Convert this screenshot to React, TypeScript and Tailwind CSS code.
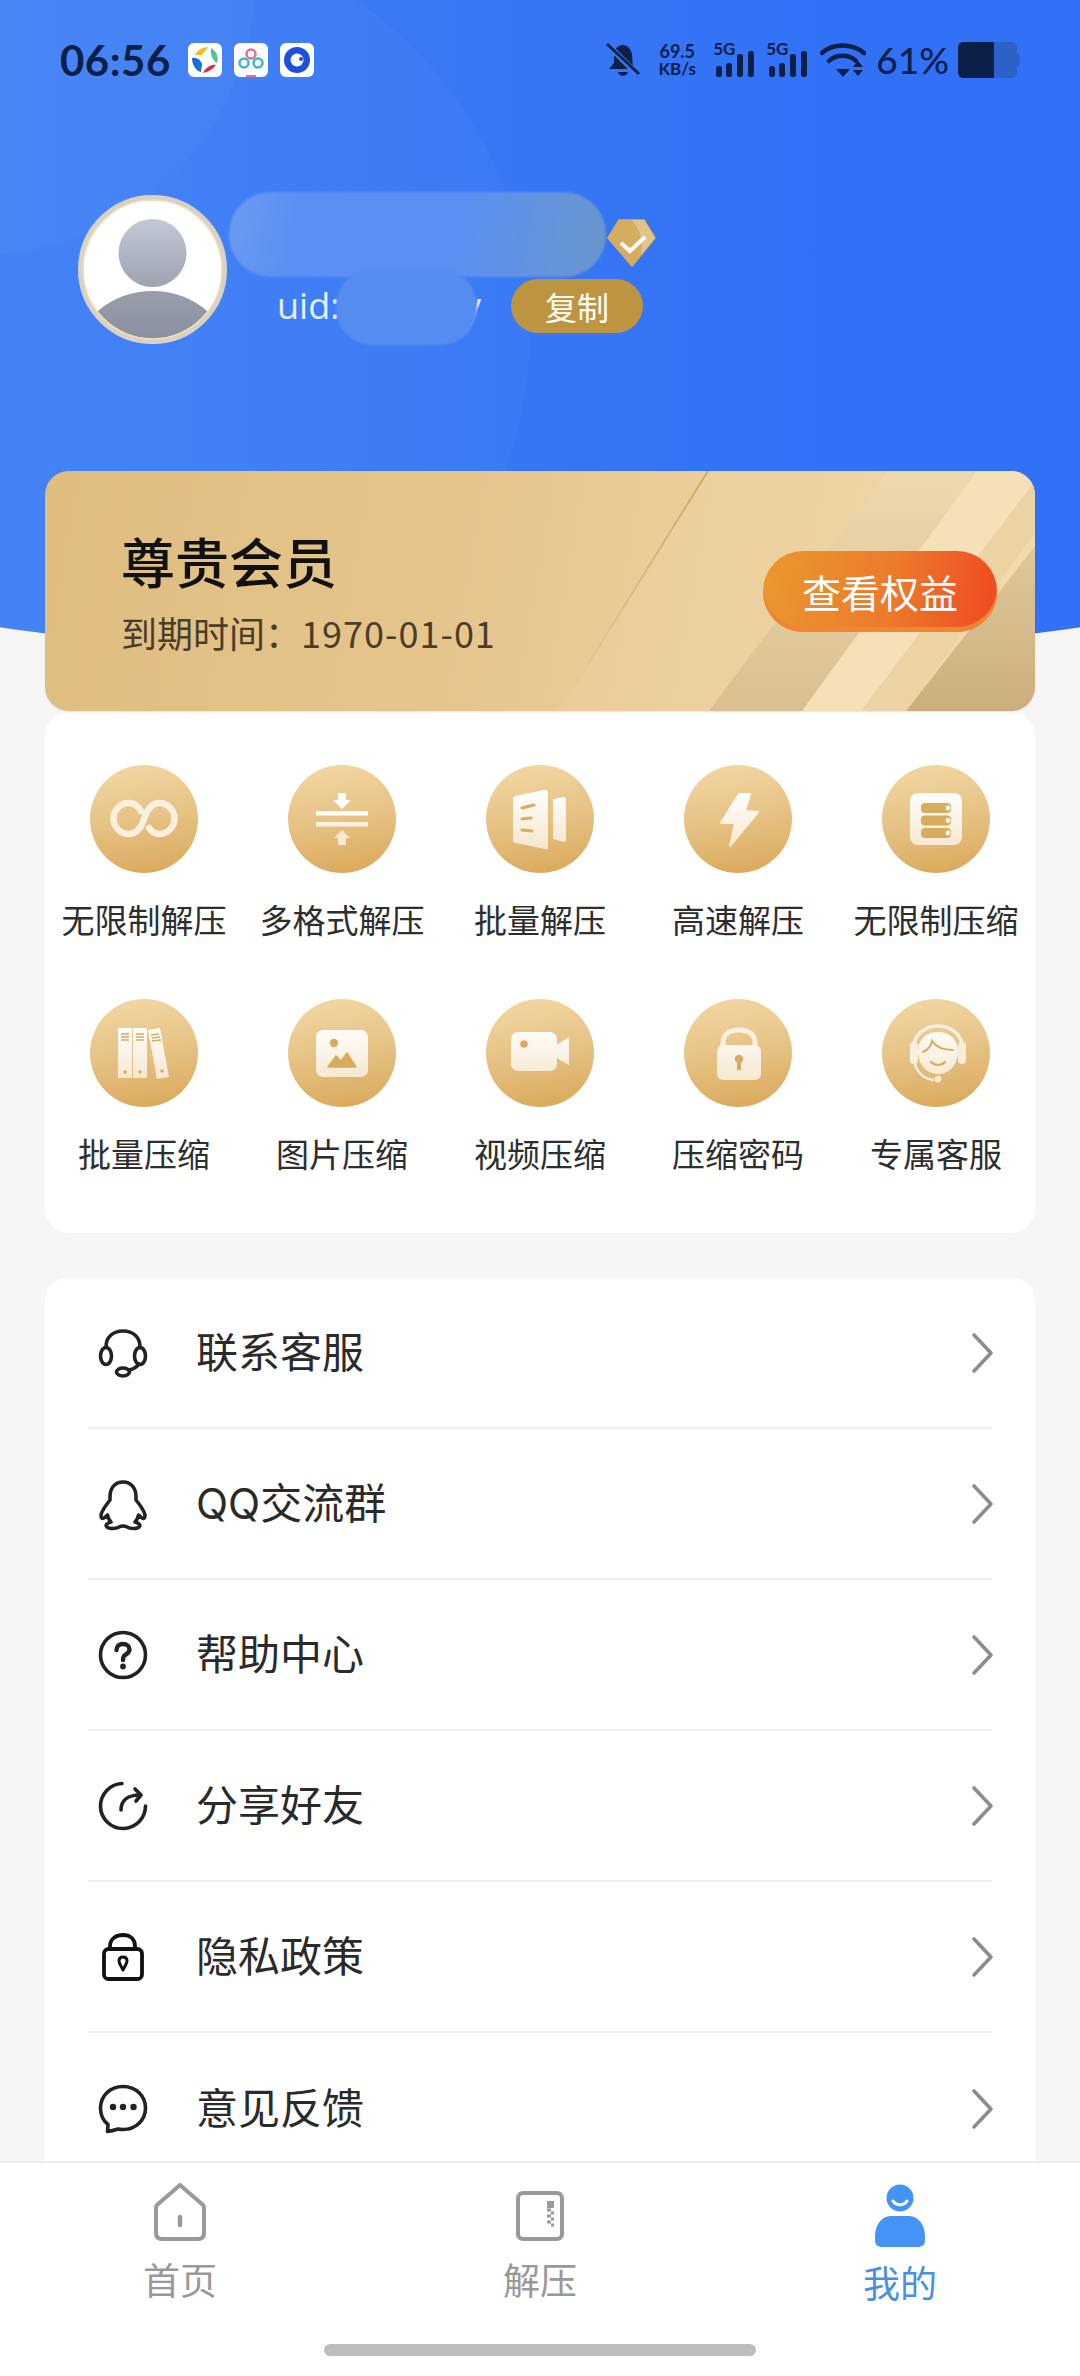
import type { ReactNode } from "react";

const ink = "#0b1f48";
const gold = "#d9ab5f";
const fill = "url(#goldIconFill)";

function Bars() {
  return (
    <div className="relative w-[43px] h-[36px]">
      <span className="absolute left-0 top-[-2px] text-[17px] leading-[18px] font-bold text-[#0b1f48] font-['Lato',sans-serif]">5G</span>
      <svg width="43" height="36" viewBox="0 0 43 36">
        <rect x="3" y="24" width="6" height="11" rx="2.5" fill={ink} />
        <rect x="13" y="21" width="6" height="14" rx="2.5" fill={ink} />
        <rect x="24" y="12" width="6" height="23" rx="2.5" fill={ink} />
        <rect x="35" y="9" width="6" height="26" rx="2.5" fill={ink} />
      </svg>
    </div>
  );
}

function StatusBar() {
  return (
    <div className="flex items-center justify-between h-[36px] mt-[42px] ml-[60px] mr-[60px]">
      <div className="flex items-center">
        <span className="w-[128px] text-[42px] leading-[36px] font-bold tracking-[0.5px] text-[#0b1f48] font-['Lato',sans-serif]">06:56</span>
        <svg width="34" height="34" viewBox="0 0 34 34">
          <rect width="34" height="34" rx="6" fill="#fff" />
          <path d="M7 12 C9 7 15 4 20 4 L14 12 Z" fill="#f5bd14" />
          <path d="M23 5 C28 8 31 13 29 20 C25 18 22 12 23 5 Z" fill="#4fc68f" />
          <path d="M4 15 C8 14 12 16 14 21 L13 29 C8 28 4 22 4 15 Z" fill="#1a6fd6" />
          <path d="M15 30 C20 29 25 26 28 22 C24 21 18 24 15 30 Z" fill="#e8224a" />
        </svg>
        <svg className="ml-[12px]" width="34" height="34" viewBox="0 0 34 34">
          <rect width="34" height="34" rx="6" fill="#fff" />
          <circle cx="17" cy="11" r="4.5" fill="none" stroke="#e2708c" strokeWidth="2.5" />
          <circle cx="10" cy="20" r="4.5" fill="none" stroke="#3fb4cf" strokeWidth="2.5" />
          <circle cx="24" cy="20" r="4.5" fill="none" stroke="#3fb4cf" strokeWidth="2.5" />
          <rect x="12" y="32" width="10" height="2" fill="#e2708c" />
        </svg>
        <svg className="ml-[12px]" width="34" height="34" viewBox="0 0 34 34">
          <rect width="34" height="34" rx="6" fill="#fff" />
          <circle cx="17" cy="17" r="13" fill="#1c4fe0" />
          <circle cx="17" cy="17" r="6.5" fill="#fff" />
          <circle cx="21" cy="16" r="2" fill="#1c4fe0" />
        </svg>
      </div>
      <div className="flex items-center">
        <svg width="34" height="36" viewBox="0 0 34 36">
          <path d="M17 3 C11 3 8 8 8 14 L8 21 L3 27 L27 27 L26 12 C24 6 21 3 17 3 Z" fill={ink} />
          <path d="M12 30 C13 35 21 35 22 30 Z" fill={ink} />
          <path d="M2 3 L32 33" stroke="#3a78f5" strokeWidth="6" />
          <path d="M1 2 L33 32" stroke={ink} strokeWidth="3" />
        </svg>
        <div className="ml-[15px] w-[44px] flex flex-col items-center text-[18px] leading-[18px] font-bold text-[#0b1f48] font-['Lato',sans-serif]">
          <span>69.5</span>
          <span className="text-[17px]">KB/s</span>
        </div>
        <div className="ml-[14px]"><Bars /></div>
        <div className="ml-[10px]"><Bars /></div>
        <svg className="ml-[11px]" width="46" height="36" viewBox="0 0 46 36">
          <path d="M2 11 C13 1 32 1 44 11" fill="none" stroke={ink} strokeWidth="4.5" strokeLinecap="round" />
          <path d="M9 19 C16 12 29 12 36 19" fill="none" stroke={ink} strokeWidth="4.5" strokeLinecap="round" />
          <path d="M16 27 L30 27 L23 35 Z" fill={ink} />
          <path d="M33 25 L38 19 L43 25 Z M33 28 L43 28 L38 34 Z" fill={ink} />
        </svg>
        <span className="ml-[10px] text-[37px] leading-[36px] font-medium text-[#0b1f48] font-['Lato',sans-serif]">61%</span>
        <svg className="ml-[9px]" width="62" height="36" viewBox="0 0 62 36">
          <path d="M35 0 L53 0 C57 0 59 2 59 6 L59 30 C59 34 57 36 53 36 L35 36 Z" fill="#2c62c8" />
          <path d="M59 11 C61 12 62 15 62 18 C62 21 61 24 59 25 Z" fill="#2c62c8" />
          <path d="M6 0 L36 0 L36 36 L6 36 C2 36 0 34 0 30 L0 6 C0 2 2 0 6 0 Z" fill={ink} />
        </svg>
      </div>
    </div>
  );
}

function Avatar() {
  return (
    <svg className="mt-[3px] shrink-0" width="149" height="149" viewBox="0 0 149 149">
      <defs>
        <linearGradient id="avatarHead" x1="0" y1="0" x2="0" y2="1">
          <stop offset="0" stopColor="#c3c8d6" />
          <stop offset="1" stopColor="#9ea3b2" />
        </linearGradient>
        <linearGradient id="avatarBody" x1="0" y1="0" x2="0" y2="1">
          <stop offset="0" stopColor="#989eac" />
          <stop offset="1" stopColor="#6f7585" />
        </linearGradient>
        <clipPath id="avatarClip">
          <circle cx="74.5" cy="74.5" r="69" />
        </clipPath>
      </defs>
      <circle cx="74.5" cy="74.5" r="72" fill="#fff" stroke="#d9d2c4" strokeWidth="5" />
      <circle cx="74.5" cy="58" r="34" fill="url(#avatarHead)" />
      <g clipPath="url(#avatarClip)">
        <ellipse cx="74.5" cy="166" rx="78" ry="70" fill="url(#avatarBody)" />
      </g>
      <circle cx="74.5" cy="74.5" r="69.5" fill="none" stroke="#f0dcb6" strokeWidth="1.5" />
    </svg>
  );
}

function Profile() {
  return (
    <div className="flex items-start mt-[114px] ml-[78px] h-[279px]">
      <Avatar />
      <div className="ml-[2px] flex flex-col">
        <div className="flex items-start">
          <div className="w-[377px] h-[85px] rounded-[42px] bg-[linear-gradient(100deg,#6c9af2_0%,#5a90f3_18%,#5a90f3_60%,#6a96cc_100%)] blur-[1px]" />
          <svg className="mt-[27px] ml-[1px]" width="49" height="48" viewBox="0 0 49 48">
            <path d="M12 1 L37 1 L48 19 L25 47 L1 19 Z" fill="#d6ac5f" stroke="#d6ac5f" strokeLinejoin="round" strokeWidth="1.5" />
            <path d="M25 1 L37 1 L48 19 L34 36 C37 20 32 10 25 1 Z" fill="#e3c488" />
            <path d="M14 24 L23 32 L38 18" fill="none" stroke="#fff" strokeWidth="4" />
          </svg>
        </div>
        <div className="relative flex items-center h-[54px] mt-[2px] ml-[48px]">
          <div className="flex justify-between w-[204px] mr-[30px] text-[36px] leading-[54px] text-[#e6efff] font-['Open_Sans',sans-serif]">
            <span>uid:</span>
            <span>y</span>
          </div>
          <span className="flex items-center justify-center w-[132px] h-[54px] rounded-full bg-[#bd9440] text-[32px] text-white">复制</span>
          <div className="absolute left-[59px] top-[-9px] w-[141px] h-[75px] rounded-[36px] bg-[#558cf0] blur-[1px]" />
        </div>
      </div>
    </div>
  );
}

function MemberCard() {
  return (
    <div className="relative mx-[45px] h-[240px] rounded-[24px] overflow-hidden bg-[linear-gradient(100deg,#dfbd80_0%,#e6c68e_45%,#f3dcb0_100%)] shadow-[0_1px_2px_rgba(0,0,0,0.08)]">
      <svg className="absolute inset-0" width="990" height="240" viewBox="0 0 990 240">
        <defs>
          <linearGradient id="stripeA" x1="0" y1="0" x2="0" y2="1">
            <stop offset="0" stopColor="#eed9ad" />
            <stop offset="1" stopColor="#dac090" />
          </linearGradient>
          <linearGradient id="stripeCorner" x1="0" y1="0" x2="0" y2="1">
            <stop offset="0" stopColor="#e0c899" />
            <stop offset="1" stopColor="#cbae7e" />
          </linearGradient>
          <linearGradient id="stripeLine" x1="0" y1="0" x2="0" y2="1">
            <stop offset="0" stopColor="#c9a25f" />
            <stop offset="1" stopColor="#e9cf9f" />
          </linearGradient>
        </defs>
        <path d="M662 0 L513 240 L664 240 L843 0 Z" fill="#eed5a6" opacity="0.3" />
        <path d="M662 0 L513 240 L515 240 L664 0 Z" fill="url(#stripeLine)" />
        <path d="M664 240 L757 240 L932 0 L843 0 Z" fill="url(#stripeA)" />
        <path d="M757 240 L816 240 L990 10 L990 0 L932 0 Z" fill="#f6e0b7" />
        <path d="M816 240 L861 240 L990 62 L990 10 Z" fill="#ecd3a3" />
        <path d="M861 240 L990 240 L990 75 Z" fill="url(#stripeCorner)" />
      </svg>
      <div className="relative flex items-center justify-between h-full pl-[76px] pr-[38px]">
        <div className="flex flex-col">
          <span className="text-[54px] leading-[68px] font-medium text-[#111]">尊贵会员</span>
          <span className="mt-[13px] text-[36px] leading-[48px] text-[#4a3d2a]">
            到期时间：<span className="tracking-[1px]">1970-01-01</span>
          </span>
        </div>
        <div className="flex items-center justify-center w-[234px] h-[81px] mt-[1px] rounded-[40px] bg-[linear-gradient(100deg,#e9992f_0%,#ec7a2b_55%,#ef4822_100%)] shadow-[inset_0_-5px_0_#ee8632] text-[39px] text-white">
          查看权益
        </div>
      </div>
    </div>
  );
}

const perks: { label: string; icon: ReactNode }[] = [
  {
    label: "无限制解压",
    icon: (
      <path
        d="M51 46 C48 41 44 38 39 38 A15.5 15.5 0 0 0 39 69 C46 69 51 63 54 54 C57 45 62 38 69 38 A15.5 15.5 0 0 1 69 69 C65 69 62 67 59 63"
        fill="none"
        stroke="#fbf0df"
        strokeWidth="6.5"
        strokeLinecap="round"
      />
    ),
  },
  {
    label: "多格式解压",
    icon: (
      <>
        <path d="M50 28 H58 V35 H63 L54 44 L45 35 H50 Z" fill="#fff" />
        <rect x="28" y="46" width="52" height="4.5" fill="#fff" />
        <rect x="28" y="57" width="52" height="4.5" fill="#fbf0df" />
        <path d="M54 65 L62 73 H58 V80 H50 V73 H46 Z" fill="#f8ead2" />
      </>
    ),
  },
  {
    label: "批量解压",
    icon: (
      <>
        <path d="M29 31 L58 25 C61 25 62 26 62 28 L62 82 C62 84 61 85 59 84 L30 78 C28 78 27 77 27 75 L27 33 C27 32 28 31 29 31 Z" fill={fill} />
        <path d="M67 34 L78 32 C80 32 80 33 80 35 L80 74 C80 76 80 77 78 77 L67 74 Z" fill={fill} />
        <path d="M36 43 L48 40 M36 54 L45 53 M36 65 L46 66" stroke={gold} strokeWidth="3" strokeLinecap="round" />
      </>
    ),
  },
  {
    label: "高速解压",
    icon: <path d="M55 29 L66 29 L61 46 L74 47 L46 81 L51 58 L37 58 Z" fill={fill} stroke={fill} strokeWidth="2" strokeLinejoin="round" />,
  },
  {
    label: "无限制压缩",
    icon: (
      <>
        <rect x="28" y="28" width="52" height="52" rx="8" fill={fill} />
        <rect x="39" y="38" width="30" height="10" rx="4" fill={gold} />
        <rect x="39" y="50.5" width="30" height="10" rx="4" fill={gold} />
        <rect x="39" y="63" width="30" height="10" rx="4" fill={gold} />
        <circle cx="66" cy="43" r="2.4" fill="#fff" />
        <circle cx="66" cy="55.5" r="2.4" fill="#fff" />
        <circle cx="66" cy="68" r="2.4" fill="#fff" />
      </>
    ),
  },
  {
    label: "批量压缩",
    icon: (
      <>
        <rect x="28" y="29" width="14" height="50" fill={fill} />
        <rect x="43" y="29" width="14" height="50" fill={fill} />
        <path d="M58 31 L70 29 L79 78 L67 80 Z" fill={fill} />
        <path d="M31 35 H39 M31 38 H39 M31 41 H39 M46 35 H54 M46 38 H54 M46 41 H54 M61 36 L69 35 M62 39 L70 38 M62 42 L71 41" stroke={gold} strokeWidth="1.4" />
        <circle cx="35" cy="73" r="1.8" fill={gold} />
        <circle cx="50" cy="73" r="1.8" fill={gold} />
        <circle cx="72" cy="72" r="1.8" fill={gold} />
      </>
    ),
  },
  {
    label: "图片压缩",
    icon: (
      <>
        <rect x="28" y="31" width="52" height="47" rx="7" fill={fill} />
        <circle cx="46" cy="44" r="4.2" fill={gold} />
        <path d="M40 68 L48 57 L53 62 L59 54 L68 68 Z" fill={gold} stroke={gold} strokeWidth="1.5" strokeLinejoin="round" />
      </>
    ),
  },
  {
    label: "视频压缩",
    icon: (
      <>
        <rect x="25" y="33" width="46" height="39" rx="7" fill={fill} />
        <path d="M69 47 L83 38 L83 66 L69 58 Z" fill={fill} />
        <circle cx="38" cy="45" r="3.8" fill={gold} />
      </>
    ),
  },
  {
    label: "压缩密码",
    icon: (
      <>
        <path d="M39 48 L39 44 C39 35 46 31 55 31 C64 31 71 35 71 44 L71 48" fill="none" stroke="#fbf0df" strokeWidth="5" />
        <rect x="33" y="46" width="44" height="35" rx="6" fill={fill} />
        <circle cx="55" cy="60" r="4.2" fill={gold} />
        <rect x="53" y="60" width="4" height="11" fill={gold} />
      </>
    ),
  },
  {
    label: "专属客服",
    icon: (
      <>
        <path d="M31 48 C33 35 43 27 56 27 C69 27 79 35 81 48" fill="none" stroke="#fbf0df" strokeWidth="3.5" />
        <rect x="28" y="43" width="8" height="22" rx="4" fill="#fbf0df" />
        <rect x="76" y="43" width="8" height="22" rx="4" fill="#f8ecd6" />
        <path d="M56 33 C45 33 36 40 36 52 C36 65 44 75 56 75 C68 75 76 65 76 52 C76 40 67 33 56 33 Z" fill={fill} />
        <path d="M41 53 C46 51 49 47 50 42 C54 48 62 51 71 51" fill="none" stroke={gold} strokeWidth="2" strokeLinecap="round" />
        <path d="M49 63 C53 67 59 67 63 63" fill="none" stroke={gold} strokeWidth="2.2" strokeLinecap="round" />
        <path d="M33 65 C36 75 43 80 52 81" fill="none" stroke="#fbf0df" strokeWidth="2.5" />
        <circle cx="56" cy="80" r="3.5" fill="#f5e6cd" />
      </>
    ),
  },
];

function Perks() {
  return (
    <div className="mx-[45px] mt-[1px] h-[521px] pt-[53px] rounded-[24px] bg-white grid grid-cols-5 grid-rows-[234px_234px] content-start">
      {perks.map((p) => (
        <div key={p.label} className="flex flex-col items-center">
          <div className="w-[108px] h-[108px] rounded-full bg-[linear-gradient(170deg,#f3d9a6_0%,#e6c284_50%,#d9a757_100%)]">
            <svg width="108" height="108" viewBox="0 0 108 108">{p.icon}</svg>
          </div>
          <span className="mt-[23px] text-[33px] leading-[46px] text-[#2e2e2e] whitespace-nowrap">{p.label}</span>
        </div>
      ))}
    </div>
  );
}

const iconStroke = { fill: "none", stroke: "#222", strokeWidth: 3.6, strokeLinecap: "round", strokeLinejoin: "round" } as const;

const menu: { label: string; icon: ReactNode }[] = [
  {
    label: "联系客服",
    icon: (
      <g {...iconStroke}>
        <ellipse cx="7" cy="27" rx="5.5" ry="8.5" />
        <ellipse cx="41" cy="27" rx="5.5" ry="8.5" />
        <path d="M7 18 C7 8 14 2 24 2 C34 2 41 8 41 18" />
        <ellipse cx="24" cy="43" rx="6.5" ry="4" />
        <path d="M30 41 C35 40 38 38 40 35" />
      </g>
    ),
  },
  {
    label: "QQ交流群",
    icon: (
      <path
        {...iconStroke}
        d="M24 2 C15 2 11 9 11 17 L11 20 C7 25 3 30 2 35 C2 38 3 39 5 38 L8.5 35 C9 38 10 40 12 42 C8 43 6 45 8 47 C10 49 17 49 20 47 C22 46 23 46 24 46 C25 46 26 46 28 47 C31 49 38 49 40 47 C42 45 40 43 36 42 C38 40 39 38 39.5 35 L43 38 C45 39 46 38 46 35 C45 30 41 25 37 20 L37 17 C37 9 33 2 24 2 Z"
      />
    ),
  },
  {
    label: "帮助中心",
    icon: (
      <g {...iconStroke}>
        <circle cx="24" cy="24" r="22.5" />
        <path d="M17.5 19 C17.5 15 20.5 13 24 13 C28 13 30.5 15.5 30.5 18.5 C30.5 22 27 23 25 25 C24.4 25.8 24 26.5 24 29" strokeWidth="4.4" />
        <circle cx="24" cy="35.5" r="1.4" strokeWidth="3" />
      </g>
    ),
  },
  {
    label: "分享好友",
    icon: (
      <g {...iconStroke}>
        <path d="M23 1.5 A22.5 22.5 0 1 0 46.5 24" />
        <path d="M22 28 C22 19 28 13 41 13" />
        <path d="M36 7 L42 13 L37 19" />
      </g>
    ),
  },
  {
    label: "隐私政策",
    icon: (
      <g {...iconStroke} stroke="#111" strokeWidth="3.8">
        <path d="M11 16 L11 13 C11 6 17 2 24 2 C31 2 36 6 36 13 L36 16" />
        <rect x="5" y="16" width="38" height="30" rx="4.5" />
        <path d="M24 24 C21 24 20 26 20 28 C20 31 23 34 24 37 C25 34 28 31 28 28 C28 26 27 24 24 24 Z" strokeWidth="3" />
      </g>
    ),
  },
  {
    label: "意见反馈",
    icon: (
      <g {...iconStroke}>
        <path d="M24 1.5 C11 1.5 1.5 11 1.5 23 C1.5 30 4.5 36 9 39.5 L8.5 46.5 C13 46 16 45 19 44 C21 44.5 22.5 44.5 24 44.5 C37 44.5 46.5 35 46.5 23 C46.5 11 37 1.5 24 1.5 Z" />
        <circle cx="14" cy="22" r="1.4" fill="#222" />
        <circle cx="24" cy="22" r="1.4" fill="#222" />
        <circle cx="34.5" cy="22" r="1.4" fill="#222" />
      </g>
    ),
  },
];

function Menu() {
  return (
    <div className="flex-1 min-h-0 mx-[45px] mt-[45px] px-[43px] rounded-t-[24px] bg-white overflow-hidden">
      {menu.map((m, i) => (
        <div key={m.label} className={`flex items-center h-[151px] ${i < menu.length - 1 ? "border-b-[2px] border-[#f0f0f0]" : ""}`}>
          <svg className="ml-[11px] shrink-0 overflow-visible" width="48" height="52" viewBox="0 0 48 52">
            <g transform="translate(0 2)">{m.icon}</g>
          </svg>
          <span className="ml-[49px] text-[42px] leading-[52px] text-[#2a2a2a] font-['Inter','Noto_Sans_CJK_SC',sans-serif]">{m.label}</span>
          <svg className="ml-auto -mr-[3px] shrink-0" width="24" height="42" viewBox="0 0 24 42">
            <path d="M3 3 L20 21 L3 39" fill="none" stroke="#8c8c8c" strokeWidth="3.6" strokeLinecap="round" strokeLinejoin="round" />
          </svg>
        </div>
      ))}
    </div>
  );
}

function BottomNav() {
  return (
    <div className="shrink-0 h-[215px] bg-white border-t-[2px] border-[#ececec]">
      <div className="grid grid-cols-3 h-[136px]">
        <div className="flex flex-col items-center">
          <svg className="mt-[20px]" width="52" height="58" viewBox="0 0 52 58">
            <path d="M26 2 L49 22 C50 23 50 24 50 25 L50 50 C50 54 48 56 44 56 L8 56 C4 56 2 54 2 50 L2 25 C2 24 2 23 3 22 Z" fill="none" stroke="#999" strokeWidth="4" strokeLinejoin="round" />
            <path d="M26 34 L26 42" stroke="#999" strokeWidth="4.5" strokeLinecap="round" />
          </svg>
          <span className="mt-[17px] text-[37px] leading-[42px] text-[#999]">首页</span>
        </div>
        <div className="flex flex-col items-center">
          <svg className="mt-[28px]" width="48" height="50" viewBox="0 0 48 50">
            <rect x="2" y="2" width="44" height="46" rx="5" fill="none" stroke="#999" strokeWidth="4" />
            <rect x="31" y="10" width="7" height="7" fill="#999" />
            <path d="M31 19 H35 M35 22 H38 M31 25 H35 M35 28 H38 M31 31 H35 M35 34 H38" stroke="#999" strokeWidth="3" />
          </svg>
          <span className="mt-[17px] text-[37px] leading-[42px] text-[#999]">解压</span>
        </div>
        <div className="flex flex-col items-center">
          <svg className="mt-[21px]" width="52" height="64" viewBox="0 0 52 64">
            <circle cx="26" cy="14" r="13.5" fill="#4593f5" />
            <path d="M19 17 C22 22 30 22 33 17" fill="none" stroke="#fff" strokeWidth="3" strokeLinecap="round" />
            <path d="M17 32 L35 32 C45 32 51 42 51 52 L51 56 C51 61 48 63 44 63 L8 63 C4 63 1 61 1 56 L1 52 C1 42 7 32 17 32 Z" fill="#4593f5" />
          </svg>
          <span className="mt-[13px] text-[37px] leading-[42px] text-[#4a8fe0]">我的</span>
        </div>
      </div>
      <div className="mx-auto mt-[45px] w-[432px] h-[12px] rounded-full bg-[#bdbdbd]" />
    </div>
  );
}

export default function App() {
  return (
    <div className="relative w-[1080px] h-[2376px] overflow-hidden bg-[#f6f6f6] font-['Noto_Sans_CJK_SC','Noto_Sans',sans-serif]">
      <svg className="absolute w-0 h-0">
        <defs>
          <linearGradient id="goldIconFill" gradientUnits="userSpaceOnUse" x1="0" y1="25" x2="0" y2="85">
            <stop offset="0" stopColor="#ffffff" />
            <stop offset="1" stopColor="#f5e6cd" />
          </linearGradient>
        </defs>
      </svg>
      {/* blue backdrop behind the profile and card */}
      <div className="absolute left-[-200px] top-0 w-[1480px] h-[659px] overflow-hidden [border-radius:0_0_50%_50%/0_0_100px_100px] bg-[linear-gradient(90deg,#4080f5_15%,#3171f6_70%)]">
        <div className="absolute left-[-70px] top-[-70px] w-[800px] h-[800px] rounded-full bg-white/[0.025]" />
        <div className="absolute left-[-95px] top-[-295px] w-[550px] h-[550px] rounded-full bg-white/[0.025]" />
      </div>
      <div className="relative flex flex-col h-full">
        <StatusBar />
        <Profile />
        <MemberCard />
        <Perks />
        <Menu />
        <BottomNav />
      </div>
    </div>
  );
}
